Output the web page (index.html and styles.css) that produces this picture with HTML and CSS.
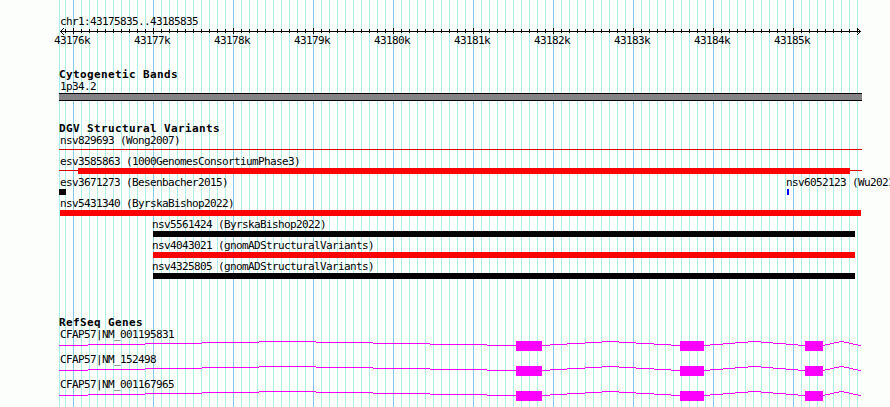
FILE: index.html
```
<!DOCTYPE html>
<html lang="en">
<head>
    <meta charset="UTF-8">
    <title>chr1:43175835..43185835</title>
    <link rel="stylesheet" href="styles.css">
</head>
<body>

    <div class="panel">

        <!-- Ruler -->
        <div class="ruler">
            <div class="label">chr1:43175835..43185835</div>
            <svg class="scale" width="803" height="8" shape-rendering="crispEdges">
                <defs>
                    <pattern id="minor" x="6" y="0" width="8" height="8" patternUnits="userSpaceOnUse">
                        <rect x="0" y="2" width="1" height="4"/>
                    </pattern>
                    <pattern id="major" x="14" y="0" width="80" height="8" patternUnits="userSpaceOnUse">
                        <rect x="0" y="1" width="1" height="6"/>
                    </pattern>
                </defs>
                <rect x="1" y="4" width="801" height="1"/>
                <rect x="6" y="0" width="793" height="8" fill="url(#minor)"/>
                <rect x="6" y="0" width="793" height="8" fill="url(#major)"/>
                <path d="M2 3h1v1h-1zM3 2h1v1h-1zM4 1h1v1h-1zM2 5h1v1h-1zM3 6h1v1h-1zM4 7h1v1h-1z"/>
                <path d="M800 3h1v1h-1zM799 2h1v1h-1zM798 1h1v1h-1zM800 5h1v1h-1zM799 6h1v1h-1zM798 7h1v1h-1z"/>
            </svg>
            <div class="ticks">
                <span>43176k</span>
                <span>43177k</span>
                <span>43178k</span>
                <span>43179k</span>
                <span>43180k</span>
                <span>43181k</span>
                <span>43182k</span>
                <span>43183k</span>
                <span>43184k</span>
                <span>43185k</span>
            </div>
        </div>

        <!-- Cytogenetic bands -->
        <div class="track bands">
            <h2>Cytogenetic Bands</h2>
            <div class="label">1p34.2</div>
            <div class="band"></div>
        </div>

        <!-- Structural variants -->
        <div class="track variants">
            <h2>DGV Structural Variants</h2>
            <div class="row">
                <div class="feature">
                    <div class="label">nsv829693 (Wong2007)</div>
                    <div class="glyph line"></div>
                </div>
            </div>
            <div class="row">
                <div class="feature">
                    <div class="label">esv3585863 (1000GenomesConsortiumPhase3)</div>
                    <div class="glyph line"><div class="bar loss" style="margin-left: 19px; width: 772px"></div></div>
                </div>
            </div>
            <div class="row">
                <div class="feature">
                    <div class="label">esv3671273 (Besenbacher2015)</div>
                    <div class="bar other" style="width: 7px"></div>
                </div>
                <div class="feature" style="margin-left: 727px">
                    <div class="label flush">nsv6052123 (Wu2021)</div>
                    <div class="bar gain" style="margin-left: 1px; width: 2px"></div>
                </div>
            </div>
            <div class="row">
                <div class="feature">
                    <div class="label">nsv5431340 (ByrskaBishop2022)</div>
                    <div class="bar loss" style="margin-left: 1px; width: 801px"></div>
                </div>
            </div>
            <div class="row">
                <div class="feature" style="margin-left: 93px">
                    <div class="label flush">nsv5561424 (ByrskaBishop2022)</div>
                    <div class="bar other" style="margin-left: 1px; width: 702px"></div>
                </div>
            </div>
            <div class="row">
                <div class="feature" style="margin-left: 93px">
                    <div class="label flush">nsv4043021 (gnomADStructuralVariants)</div>
                    <div class="bar loss" style="margin-left: 1px; width: 702px"></div>
                </div>
            </div>
            <div class="row">
                <div class="feature" style="margin-left: 93px">
                    <div class="label flush">nsv4325805 (gnomADStructuralVariants)</div>
                    <div class="bar other" style="margin-left: 1px; width: 702px"></div>
                </div>
            </div>
        </div>

        <!-- Genes: same exons for the three transcripts -->
        <div class="track genes">
            <h2>RefSeq Genes</h2>
            <div class="gene">
                <div class="label">CFAP57|NM_001195831</div>
                <svg class="transcript" width="803" height="10" shape-rendering="crispEdges">
                    <g id="transcript">
                        <path class="intron" d="M0 4.5H29M29 3.5H86M86 2.5H143M143 1.5H200M200 .5H257M257 1.5H314M314 2.5H371M371 3.5H428M428 4.5H457"/>
                        <path class="intron" d="M483 4.5H491M491 3.5H508M508 2.5H526M526 1.5H543M543 .5H560M560 1.5H577M577 2.5H595M595 3.5H612M612 4.5H621"/>
                        <path class="intron" d="M645 4.5H651M651 3.5H664M664 2.5H676M676 1.5H689M689 .5H702M702 1.5H714M714 2.5H727M727 3.5H739M739 4.5H746"/>
                        <path class="intron" d="M764 4.5H766M766 3.5H771M771 2.5H775M775 1.5H780M780 .5H785M785 1.5H790M790 2.5H794M794 3.5H799M799 4.5H802"/>
                        <rect class="exon" x="457" y="0" width="26" height="10"/>
                        <rect class="exon" x="621" y="0" width="24" height="10"/>
                        <rect class="exon" x="746" y="0" width="18" height="10"/>
                    </g>
                </svg>
            </div>
            <div class="gene">
                <div class="label">CFAP57|NM_152498</div>
                <svg class="transcript" width="803" height="10" shape-rendering="crispEdges"><use href="#transcript"/></svg>
            </div>
            <div class="gene">
                <div class="label">CFAP57|NM_001167965</div>
                <svg class="transcript" width="803" height="10" shape-rendering="crispEdges"><use href="#transcript"/></svg>
            </div>
        </div>

    </div>

</body>
</html>
```
FILE: styles.css
```
html {
    overflow: hidden;
}

body {
    margin: 0;
    height: 407px;
    overflow: hidden;
    background-color: #fcfefc;
    color: #000;
    font-family: "DejaVu Sans Mono", monospace;
    font-size: 11px;
}

svg {
    display: block;
}

/* Panel with the grid: major line every 80px, minor every 8px */
.panel {
    box-sizing: border-box;
    width: 803px;
    height: 407px;
    margin-left: 59px;
    padding-top: 14px;
    background-image:
        linear-gradient(to right, #84cae8 1px, transparent 1px),
        linear-gradient(to right, #aceeec 1px, transparent 1px),
        linear-gradient(#aceeec, #aceeec);
    background-size: 80px 100%, 8px 100%, 1px 100%;
    background-position: 14px 0, 6px 0, 0 0;
    background-repeat: repeat-x, repeat-x, no-repeat;
}

.label {
    height: 14px;
    line-height: 14px;
    padding-left: 1px;
    letter-spacing: -0.622px;
    white-space: nowrap;
}

.label.flush {
    padding-left: 0;
}

h2 {
    margin: 0;
    height: 12px;
    line-height: 14px;
    font-size: 11px;
    letter-spacing: 0.378px;
    white-space: nowrap;
}

/* Ruler */
.ruler .label {
    line-height: 16px;
}

.scale {
    margin-top: -1px;
}

.ticks {
    display: flex;
    width: 800px;
    height: 12px;
    margin-left: -27px;
    line-height: 12px;
    letter-spacing: -0.622px;
}

.ticks span {
    flex: 0 0 80px;
    text-align: center;
}

/* Cytogenetic bands */
.bands {
    margin-top: 21px;
}

.band {
    box-sizing: border-box;
    height: 8px;
    border-top: 1px solid #000;
    border-bottom: 1px solid #000;
    background-color: #848284;
}

.bands .label {
    height: 13px;
}

/* Structural variants */
.variants {
    margin-top: 21px;
}

.variants h2 {
    height: 11px;
}

.variants .label {
    line-height: 16px;
}

.row {
    display: grid;
    height: 21px;
}

.feature {
    grid-area: 1 / 1;
}

.glyph {
    height: 6px;
}

.line {
    background: linear-gradient(#dc0204, #dc0204) 0 2px / 100% 1px no-repeat;
}

.bar {
    height: 6px;
}

.loss {
    background-color: #fc0204;
}

.gain {
    background-color: #0402fc;
}

.other {
    background-color: #040204;
}

/* Genes */
.genes {
    margin-top: 36px;
}

.genes h2 {
    height: 11px;
}

.genes .label {
    line-height: 16px;
}

.gene {
    height: 25px;
}

.intron {
    stroke: #fc02fc;
    fill: none;
}

.exon {
    fill: #fc02fc;
}
```
